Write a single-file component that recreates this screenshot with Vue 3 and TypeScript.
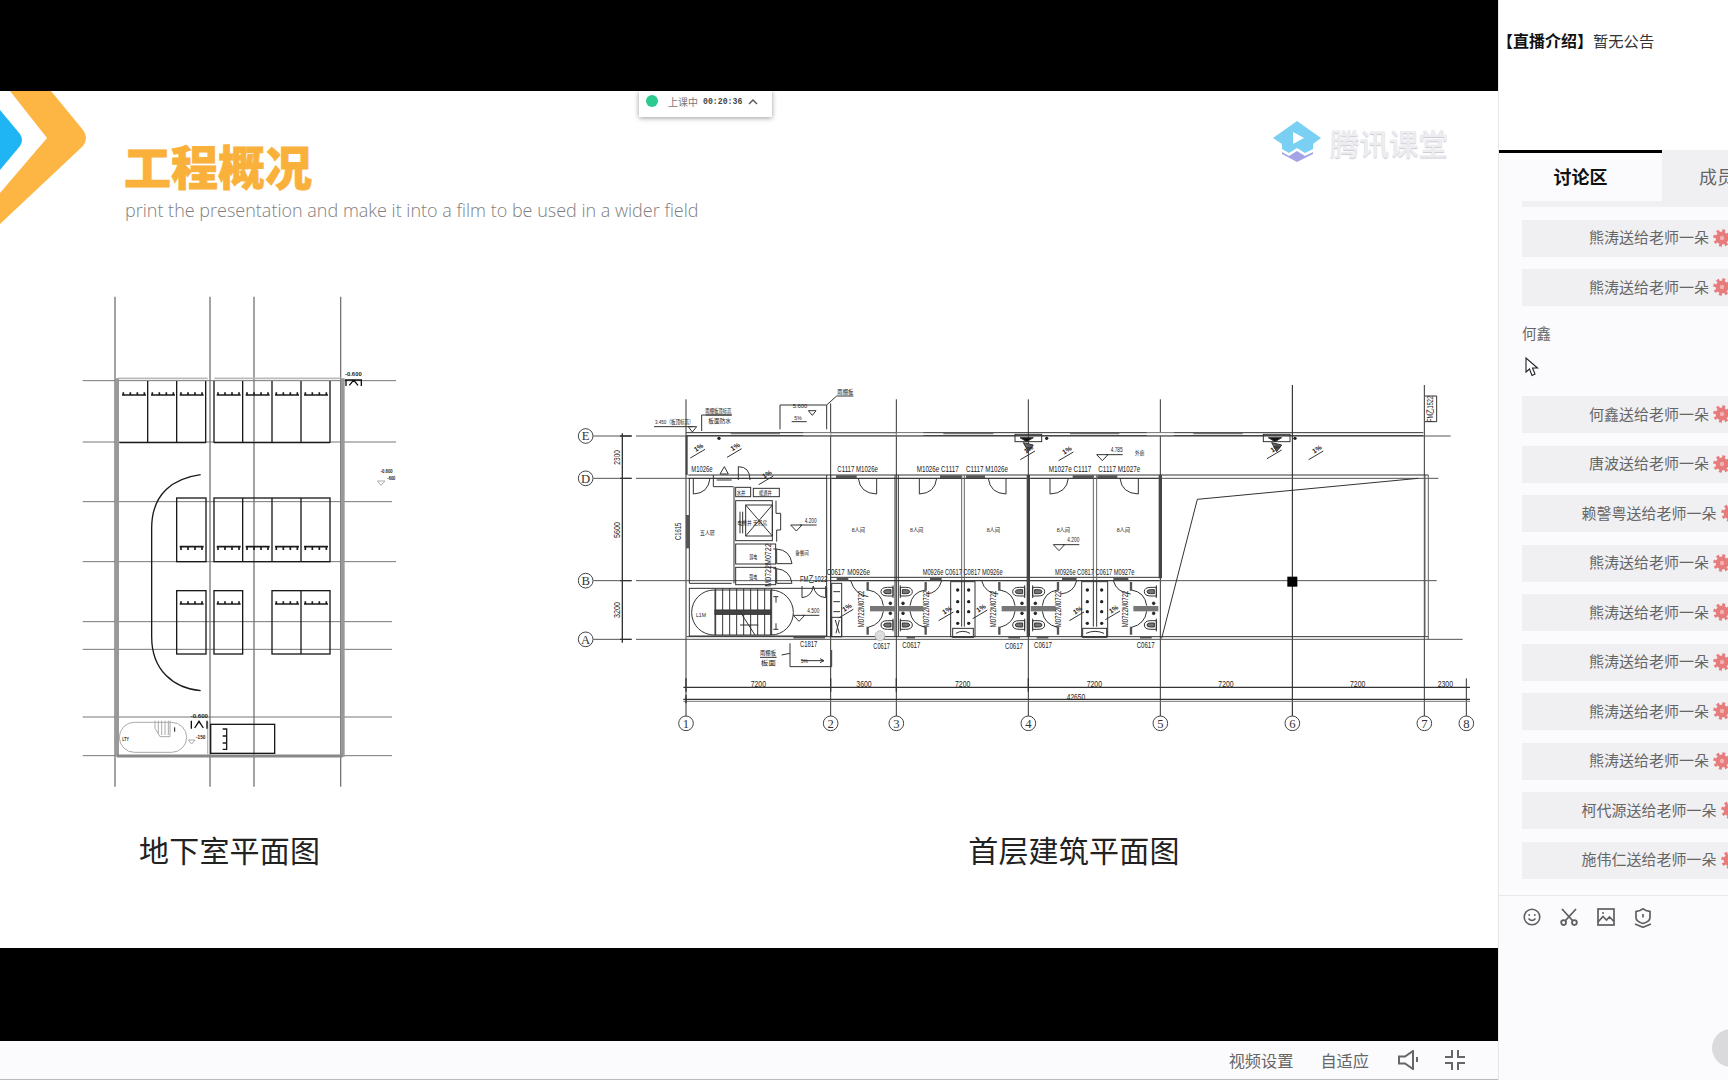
<script setup lang="ts">
interface Label {
  x: number
  y: number
  t: string
  w?: number
  s?: number
  r?: boolean
}

// second half of the first-floor plan was measured from x=1000, so it is shifted by this
const S = 1320

const gifts = [
  '熊涛', '熊涛', null, '何鑫', '唐波', '赖謦粤', '熊涛', '熊涛', '熊涛', '熊涛', '熊涛', '柯代源', '施伟仁',
]

// basement plan
const tickRows = [345, 800, 972]
const tickSpans: Record<number, number[]> = {
  345: [186, 273, 359, 470, 557, 645, 732],
  800: [359, 470, 557, 645, 732],
  972: [359, 470, 645, 732],
}
const tickPath = (y: number) =>
  tickSpans[y]
    .map((x) => {
      const dir = y === 800 ? 10 : -8
      let d = `M${x} ${y}h72`
      for (let i = 0; i < 4; i++) d += `M${x + 4 + i * 21} ${y}v${dir}`
      return d
    })
    .join('')
const basementTicks = tickRows.map(tickPath).join('')

const basementLabels: Label[] = [
  { x: 855, y: 288, t: '-0.600', w: 50, s: 18 },
  { x: 962, y: 580, t: '-0.600', w: 36, s: 18 },
  { x: 982, y: 600, t: '-600', w: 24, s: 18 },
  { x: 392, y: 1314, t: '-0.600', w: 52, s: 18 },
  { x: 408, y: 1378, t: '-150', w: 28, s: 18 },
  { x: 187, y: 1382, t: 'LTY', w: 20, s: 16 },
]

// first-floor plan
const axisNums = [
  { x: 378, t: '1' }, { x: 812, t: '2' }, { x: 1009, t: '3' }, { x: 1405, t: '4' },
  { x: 481 + S, t: '5' }, { x: 877 + S, t: '6' }, { x: 1273 + S, t: '7' }, { x: 1399 + S, t: '8' },
]
const axisLetters = [
  { y: 198, t: 'E' }, { y: 325, t: 'D' }, { y: 632, t: 'B' }, { y: 808, t: 'A' },
]
const stalls = [
  { x: 1005, flip: false }, { x: 1015, flip: true }, { x: 1400, flip: false },
  { x: 1412, flip: true }, { x: 1795, flip: false },
]
const doors = [
  'M400 325v47Q445 370 450 325', 'M950 325v47Q900 370 895 325', 'M1078 325v47Q1125 370 1130 325',
  'M1338 325v47Q1290 370 1285 325', 'M1470 325v47Q1520 370 1525 325', `M${415 + S} 325v47Q${365 + S} 370 ${360 + S} 325`,
  'M872 632Q885 675 925 680', 'M1145 632Q1135 670 1098 672', 'M1265 632Q1275 670 1315 672',
  `M${230 + S} 632Q${222 + S} 668 ${182 + S} 672`, `M${340 + S} 632Q${350 + S} 668 ${392 + S} 672`,
  'M726 648v35Q755 680 760 648', 'M797 648v35Q765 680 760 648',
  'M640 537h10v44h46Q690 540 650 537', 'M640 596h10v44h46Q690 600 650 596', 'M535 330v-40Q570 290 570 330',
]
const slopes = [
  [415, 250], [525, 248], [620, 330], [1405, 255], [200 + S, 258], [825 + S, 252], [950 + S, 255],
  [860, 730], [1160, 738], [1262, 732], [232 + S, 738], [340 + S, 735],
]
const columns = [1365, 790 + S]
const dots = [[477, 205], [1460, 205], [885 + S, 205]]
const elevations = [
  { x: 692, y: 465, t: '4.200', tx: 734, ty: 458, w: 36 },
  { x: 700, y: 736, t: '4.500', tx: 742, ty: 728, w: 36 },
  { x: 290 + S, y: 254, t: '4.785', tx: 332 + S, ty: 246, w: 36 },
  { x: 160 + S, y: 524, t: '4.200', tx: 202 + S, ty: 516, w: 36 },
]

const floorLabels: Label[] = [
  { x: 394, y: 307, t: 'M1026e', w: 64 },
  { x: 832, y: 307, t: 'C1117 M1026e', w: 122 },
  { x: 1070, y: 307, t: 'M1026e C1117', w: 126 },
  { x: 1218, y: 307, t: 'C1117 M1026e', w: 126 },
  { x: 1466, y: 307, t: 'M1027e C1117', w: 128 },
  { x: 295 + S, y: 307, t: 'C1117 M1027e', w: 126 },
  { x: 800, y: 616, t: 'C0617', w: 54 },
  { x: 862, y: 616, t: 'M0926e', w: 68 },
  { x: 1088, y: 616, t: 'M0926e C0617 C0817 M0926e', w: 240 },
  { x: 165 + S, y: 616, t: 'M0926e C0817 C0617 M0927e', w: 238 },
  { x: 720, y: 637, t: 'FM乙1022', w: 82 },
  { x: 720, y: 831, t: 'C1817', w: 52 },
  { x: 940, y: 836, t: 'C0617', w: 50 },
  { x: 1027, y: 835, t: 'C0617', w: 54 },
  { x: 1335, y: 836, t: 'C0617', w: 54 },
  { x: 1422, y: 833, t: 'C0617', w: 54 },
  { x: 410 + S, y: 833, t: 'C0617', w: 54 },
  { x: 572, y: 950, t: '7200', w: 46 },
  { x: 889, y: 950, t: '3600', w: 46 },
  { x: 1185, y: 950, t: '7200', w: 46 },
  { x: 260 + S, y: 950, t: '7200', w: 46 },
  { x: 655 + S, y: 950, t: '7200', w: 46 },
  { x: 1050 + S, y: 950, t: '7200', w: 46 },
  { x: 1313 + S, y: 950, t: '2300', w: 46 },
  { x: 200 + S, y: 990, t: '42650', w: 56 },
  { x: 420, y: 496, t: '五人寝', w: 44, s: 17 },
  { x: 875, y: 486, t: '8人间', w: 40, s: 17 },
  { x: 1050, y: 486, t: '8人间', w: 40, s: 17 },
  { x: 1280, y: 486, t: '8人间', w: 40, s: 17 },
  { x: 170 + S, y: 486, t: '8人间', w: 40, s: 17 },
  { x: 350 + S, y: 486, t: '8人间', w: 40, s: 17 },
  { x: 706, y: 556, t: '备餐间', w: 40, s: 17 },
  { x: 405 + S, y: 256, t: '外廊', w: 28, s: 17 },
  { x: 568, y: 566, t: '弱电', w: 24, s: 17 },
  { x: 568, y: 628, t: '强电', w: 24, s: 17 },
  { x: 530, y: 374, t: '水井', w: 26, s: 17 },
  { x: 597, y: 376, t: '暖通井', w: 38, s: 17 },
  { x: 532, y: 464, t: '电梯井 无机房', w: 90, s: 17 },
  { x: 408, y: 740, t: 'L1M', w: 30, s: 17 },
  { x: 285, y: 162, t: '3.450（板顶标高）', w: 116, s: 18 },
  { x: 436, y: 128, t: '雨棚板顶标高', w: 78, s: 18 },
  { x: 445, y: 160, t: '板面防水', w: 68, s: 18 },
  { x: 832, y: 72, t: '雨棚板', w: 48, s: 18 },
  { x: 698, y: 113, t: '5.600', w: 44, s: 18 },
  { x: 703, y: 149, t: '5%', w: 22, s: 18 },
  { x: 600, y: 855, t: '雨棚板', w: 48, s: 18 },
  { x: 602, y: 884, t: '板面', w: 46, s: 18 },
  { x: 722, y: 880, t: '5%', w: 22, s: 18 },
  { x: 362, y: 510, t: 'C1615', w: 52, r: true },
  { x: 180, y: 284, t: '2300', w: 44, r: true },
  { x: 180, y: 504, t: '5600', w: 48, r: true },
  { x: 180, y: 744, t: '3200', w: 48, r: true },
  { x: 912, y: 772, t: 'M0722M0722', w: 110, r: true },
  { x: 1108, y: 772, t: 'M0722M0722', w: 110, r: true },
  { x: 1308, y: 772, t: 'M0722M0722', w: 110, r: true },
  { x: 183 + S, y: 772, t: 'M0722M0722', w: 110, r: true },
  { x: 383 + S, y: 772, t: 'M0722M0722', w: 110, r: true },
  { x: 632, y: 650, t: 'M0722M0722', w: 130, r: true },
  { x: 1298 + S, y: 156, t: 'FM乙1522', w: 78, r: true },
]
const labelTransform = (l: Label) => (l.r ? `rotate(-90 ${l.x} ${l.y})` : undefined)

const treads = Array.from({ length: 9 }, (_, i) => 467 + i * 21)
</script>

<template>
  <div class="page">
    <div class="main">
      <div class="band-top"></div>
      <div class="slide">
        <div class="status">
          <span class="status-dot"></span>
          <span class="status-text">上课中</span>
          <span class="status-time">00:20:36</span>
          <svg class="status-arrow" width="10" height="7" viewBox="0 0 10 7">
            <path d="M1 6l4-4 4 4" fill="none" stroke="#555" stroke-width="1.4" />
          </svg>
        </div>

        <div class="head">
          <svg class="chevron" width="88" height="134" viewBox="0 0 88 134">
            <path d="M10 0H51L83 39Q89 47 83 55L0 133V102L47 47Z" fill="#fdb644" />
            <path d="M0 19L20 43Q24 49 20 55L0 79Z" fill="#1fb5f4" />
          </svg>
          <div class="head-text">
            <div class="title">工程概况</div>
            <div class="subtitle">print the presentation and make it into a film to be used in a wider field</div>
          </div>
          <div class="brand">
            <svg width="49" height="42" viewBox="0 0 49 42">
              <path d="M24 0L48 17L40 23V28L32 32L24 27L16 32L9 28V23L0 17Z" fill="#7ad0f2" />
              <path d="M9 31L16 35L24 30L32 35L40 31V33L24 41L9 33Z" fill="#a3a3e6" />
              <path d="M20 11L31 17L20 23Z" fill="#fff" />
            </svg>
            <span class="brand-name">腾讯课堂</span>
          </div>
        </div>

        <div class="plans">
          <svg class="plan plan-b" width="360" height="520" viewBox="0 0 1080 1560">
            <g fill="none" stroke="#777" stroke-width="4">
              <path d="M165 50V1520M450 50V1520M582 50V1520M842 50V1520" />
              <path stroke-width="3" d="M68 302H1008M68 486H1008M68 665H996M68 845H1008M68 1025H996M68 1108H996M68 1311H996M68 1427H996" />
            </g>
            <g fill="none">
              <path stroke="#bbb" stroke-width="5" d="M175 295H443M463 295H842" />
              <path stroke="#999" stroke-width="12" d="M171 295V1430M848 295V1430" />
              <path stroke="#888" stroke-width="9" d="M171 1428H848" />
              <path stroke="#bbb" stroke-width="4" d="M443 1325V1425" />
            </g>
            <g fill="none" stroke="#1a1a1a" stroke-width="4">
              <path d="M263 303V488M350 303V488M437 303V488M178 488H438M462 303V488M548 303V488M636 303V488M723 303V488M810 303V488M462 488H810" />
              <rect x="350" y="654" width="88" height="191" />
              <rect x="462" y="654" width="348" height="191" />
              <path d="M548 654V845M636 654V845M723 654V845" />
              <rect x="350" y="932" width="88" height="190" />
              <rect x="462" y="932" width="86" height="190" />
              <rect x="636" y="932" width="174" height="190" />
              <path d="M723 932V1122" />
              <path d="M422 584C340 595 275 640 275 745L275 1070C275 1170 340 1225 422 1232" />
              <rect x="452" y="1333" width="192" height="87" />
              <path d="M500 1345V1410M488 1347H500M488 1368H500M488 1389H500M488 1408H500" />
              <path :d="basementTicks" stroke-width="5" />
            </g>
            <g fill="none" stroke="#aaa" stroke-width="3">
              <rect x="178" y="1327" width="202" height="90" rx="45" />
              <path d="M285 1322V1345L300 1370H330V1322M295 1322V1360M305 1322V1365M315 1322V1365M325 1322V1365" />
              <path d="M385 1380H405L395 1392Z" />
              <path d="M952 603H975L963 616Z" />
            </g>
            <g fill="none" stroke="#111" stroke-width="3">
              <path d="M858 298V318M904 298V318M868 316L881 300L894 316M855 300H905" stroke-width="4" />
              <path d="M394 1322V1346M441 1322V1346M404 1344L417 1324L430 1344" stroke-width="4" />
              <path d="M344 1342V1355" />
            </g>
            <g class="cad-text">
              <text
                v-for="l in basementLabels"
                :key="l.x + l.t"
                :x="l.x"
                :y="l.y"
                :font-size="l.s"
                :textLength="l.w"
                lengthAdjust="spacingAndGlyphs"
                font-weight="700"
              >{{ l.t }}</text>
            </g>
          </svg>

          <svg class="plan plan-f" width="938" height="380" viewBox="0 0 2814 1140">
            <!-- axes -->
            <g fill="none" stroke="#333" stroke-width="3">
              <path d="M378 88V1040M812 100V1040M1009 88V1040M1405 88V1040" />
              <path :d="`M${481 + S} 88V1040M${1273 + S} 45V1040M${1399 + S} 925V1040`" />
              <path stroke="#111" :d="`M${877 + S} 45V1040`" />
              <path stroke="#555" :d="`M100 198H215M228 198H${1352 + S}M100 325H215M228 325H${1315 + S}M100 632H215M228 632H${1310 + S}M100 808H215M228 808H${1388 + S}`" />
              <path stroke-width="4" d="M187 190V818M180 198H215M180 325H215M180 632H215M180 808H215" />
              <path stroke-width="4" :d="`M370 952H${1410 + S}M370 988H${1410 + S}`" />
              <path stroke="#777" stroke-width="3" :d="`M370 994H${1410 + S}`" />
              <path stroke-width="4" d="M378 925V965M812 925V965M1009 925V965M1405 925V965M378 975V1000" />
            </g>
            <g fill="none" stroke="#444" stroke-width="3">
              <g v-for="a in axisNums" :key="a.x"><circle :cx="a.x" cy="1060" r="22" fill="#fff" /></g>
              <g v-for="a in axisLetters" :key="a.y"><circle cx="77" :cy="a.y" r="22" /></g>
            </g>
            <g class="axis-text">
              <text v-for="a in axisNums" :key="a.x" :x="a.x" y="1073" font-size="38" text-anchor="middle">{{ a.t }}</text>
              <text v-for="a in axisLetters" :key="a.y" x="77" :y="a.y + 13" font-size="38" text-anchor="middle">{{ a.t }}</text>
            </g>

            <!-- walls -->
            <g fill="none" stroke="#333" stroke-width="3">
              <path :d="`M378 188H${1270 + S}M385 315H${1285 + S}M385 325H800M815 325H1400M1412 325H1795M380 800H${1285 + S}M812 622H1798M812 632H1798`" />
              <path d="M388 325V640H515M522 350V640" />
              <path d="M800 315V800M812 315V800M1005 315V800M1015 315V800" />
              <path stroke="#666" d="M1205 315V632M1213 315V632" />
              <path :d="`M${280 + S} 315V632M${290 + S} 315V632M${1275 + S} 315V800M${1285 + S} 315V808`" stroke="#666" />
              <path :d="`M${485 + S} 805L${592 + S} 388L${1255 + S} 325`" />
              <path stroke="#444" stroke-width="6" d="M380 198V315" />
              <path stroke="#444" stroke-width="10" :d="`M1405 315V800M${481 + S} 315V625`" />
              <path stroke="#555" stroke-width="10" d="M383 435V535" />
              <path stroke="#555" stroke-width="8" :d="`M828 320H890M1140 320H1205M1218 320H1275M${218 + S} 320H${280 + S}M${292 + S} 320H${352 + S}M830 627H865M1110 627H1145M${186 + S} 627H${230 + S}M${340 + S} 627H${385 + S}`" />
              <path stroke="#555" stroke-width="7" :d="`M700 802H795M945 802H975M1040 802H1065M1345 802H1380M1430 802H1465M${420 + S} 802H${455 + S}`" />
              <path stroke="#777" stroke-width="4" :d="`M512 191H660M1150 191H1300M${210 + S} 191H${358 + S}M${580 + S} 191H${728 + S}`" />
              <path stroke="#333" stroke-width="3" :d="`M378 197H${1270 + S}`" />
              <path stroke="#fff" stroke-width="7" :d="`M730 192H812M1010 192H1090M${440 + S} 192H${522 + S}`" />
              <path stroke="#888" stroke-width="2" :d="`M730 188H1090M730 197H1090M${440 + S} 188H${522 + S}M${440 + S} 197H${522 + S}`" />
            </g>

            <!-- core -->
            <g fill="none" stroke="#333" stroke-width="3">
              <rect x="527" y="352" width="45" height="28" />
              <rect x="580" y="355" width="78" height="25" />
              <rect x="527" y="392" width="110" height="120" />
              <rect x="557" y="405" width="80" height="93" />
              <path d="M557 405L637 498M637 405L557 498" />
              <rect x="527" y="522" width="120" height="60" />
              <rect x="527" y="592" width="120" height="52" />
              <path d="M648 392V430H662V480H650V515M540 425V490M548 425V490" />
              <path d="M460 315V350H520M470 330H515" />
              <path d="M493 290L480 312H505Z" />
              <rect x="388" y="655" width="412" height="143" />
              <rect x="395" y="660" width="305" height="135" rx="67" />
              <path d="M465 660V795M632 660V795" />
              <path v-for="t in treads" :key="t" :d="`M${t} 655V795`" />
              <rect x="465" y="720" width="167" height="13" fill="#444" />
              <path d="M540 725L585 795M540 765H595M648 680V698M648 760V778M640 680H655M640 778H655" />
              <path v-for="d in doors" :key="d" :d="d" />
              <rect x="815" y="640" width="30" height="160" />
              <rect x="815" y="742" width="30" height="58" />
              <path d="M826 750L838 790M828 790L838 750M820 665H840M820 695H840M820 725H840" />
              <rect x="1172" y="635" width="73" height="165" />
              <rect x="1178" y="775" width="62" height="27" />
              <path d="M1205 632V770M1213 632V770M1188 790Q1208 778 1230 790" />
              <rect :x="245 + S" y="635" width="78" height="165" />
              <rect :x="248 + S" y="775" width="72" height="27" />
              <path :d="`M${280 + S} 632V770M${290 + S} 632V770M${258 + S} 790Q${285 + S} 778 ${312 + S} 790`" />
              <path d="M660 178V105H800V178M800 105L830 78H880M282 170H400M385 170L410 170L397 186ZM425 183V135H515M437 135H515M695 155H740M745 122H768L757 136Z" />
              <path d="M690 820V890H815V840M665 855L690 850M600 862H650M725 872H790M780 866L792 872L780 878" />
              <path :d="`M${1275 + S} 78H${1310 + S}V155H${1275 + S}`" />
            </g>
            <g fill="#222">
              <circle v-for="c in [660, 695, 725, 760]" :key="c" cx="1193" :cy="c" r="5" />
              <circle v-for="c in [660, 695, 725, 760]" :key="c" cx="1226" :cy="c" r="5" />
              <circle v-for="c in [660, 695, 725, 760]" :key="c" :cx="262 + S" :cy="c" r="5" />
              <circle v-for="c in [660, 695, 725, 760]" :key="c" :cx="305 + S" :cy="c" r="5" />
              <circle v-for="d in dots" :key="d[0]" :cx="d[0]" :cy="d[1]" r="5" />
              <rect :x="862 + S" y="620" width="30" height="30" fill="#000" />
            </g>

            <!-- toilet stalls -->
            <g
              v-for="s in stalls"
              :key="s.x"
              :transform="`translate(${s.x} 632) scale(${s.flip ? -1 : 1} 1)`"
              fill="none"
              stroke="#333"
              stroke-width="3"
            >
              <path stroke="#777" stroke-width="16" d="M-75 84H0" />
              <path d="M-80 28Q-40 35 -35 75M-80 140Q-40 130 -35 92" />
              <path stroke="#555" stroke-width="7" d="M-82 4V30M-82 138V162" />
              <path d="M-6 20H-22Q-42 20 -42 33Q-42 46 -22 46H-6ZM-6 14V52" />
              <path d="M-12 27H-24Q-34 27 -34 33Q-34 39 -24 39H-12Z" fill="#777" />
              <path d="M-6 120H-22Q-42 120 -42 133Q-42 146 -22 146H-6ZM-6 114V152" />
              <path d="M-12 127H-24Q-34 127 -34 133Q-34 139 -24 139H-12Z" fill="#777" />
              <circle cx="-14" cy="68" r="4" fill="#222" />
              <circle cx="-14" cy="98" r="4" fill="#222" />
            </g>

            <!-- column blocks -->
            <g v-for="c in columns" :key="c" fill="none" stroke="#333" stroke-width="3">
              <rect :x="c" y="193" width="80" height="22" />
              <path :d="`M${c + 15} 203H${c + 55}L${c + 35} 215Z`" fill="#111" />
              <path :d="`M${c + 25} 218L${c + 40} 245L${c + 55} 225Z`" fill="#666" />
            </g>
            <g fill="none" stroke="#333" stroke-width="3">
              <path
                v-for="p in slopes"
                :key="p[0] + '-' + p[1]"
                :d="`M${p[0] - 24} ${p[1] + 14}L${p[0] + 20} ${p[1] - 12}`"
              />
              <g v-for="e in elevations" :key="e.x">
                <path :d="`M${e.x} ${e.y}h34l-17 18zM${e.x + 28} ${e.y}h50`" />
              </g>
            </g>
            <circle cx="960" cy="797" r="15" fill="#ddd" stroke="#aaa" stroke-width="2" />

            <g class="cad-text">
              <text
                v-for="p in slopes"
                :key="'s' + p[0] + '-' + p[1]"
                :x="p[0] - 8"
                :y="p[1] - 4"
                font-size="20"
                font-weight="700"
                :transform="`rotate(-32 ${p[0] - 8} ${p[1] - 4})`"
              >1%</text>
              <text
                v-for="l in floorLabels"
                :key="l.x + l.t + l.y"
                :x="l.x"
                :y="l.y"
                :font-size="l.s ?? 25"
                :textLength="l.w"
                lengthAdjust="spacingAndGlyphs"
                :transform="labelTransform(l)"
              >{{ l.t }}</text>
              <text
                v-for="e in elevations"
                :key="e.t + e.tx"
                :x="e.tx"
                :y="e.ty"
                font-size="23"
                :textLength="e.w"
                lengthAdjust="spacingAndGlyphs"
              >{{ e.t }}</text>
            </g>
          </svg>
        </div>

        <div class="captions">
          <span>地下室平面图</span>
          <span>首层建筑平面图</span>
        </div>
      </div>
      <div class="band-bottom"></div>
      <div class="controls">
        <span>视频设置</span>
        <span>自适应</span>
        <svg class="speaker" width="20" height="20" viewBox="0 0 20 20" fill="none" stroke="#666" stroke-width="2">
          <path d="M1 6.5H7L15 1V19L7 13.5H1Z" />
          <path d="M19 7V12" />
        </svg>
        <svg width="20" height="20" viewBox="0 0 20 20" fill="none" stroke="#666" stroke-width="2">
          <path d="M7 0V7H0M13 0V7H20M0 13H7V20M20 13H13V20" />
        </svg>
      </div>
    </div>

    <aside class="side">
      <div class="notice"><b>【直播介绍】</b>暂无公告</div>
      <div class="tabs">
        <div class="tab tab-on">讨论区</div>
        <div class="tab">成员</div>
      </div>
      <div class="chat">
        <div class="gift gift-cut"></div>
        <template v-for="(name, i) in gifts" :key="i">
          <div v-if="name === null" class="msg">
            <div class="msg-name">何鑫</div>
            <svg class="mouse" width="14" height="20" viewBox="0 0 14 20">
              <path d="M1 1V15L4.5 12L7 18.5L10 17L7.5 11H12.5Z" fill="#fff" stroke="#222" stroke-width="1.1" />
            </svg>
          </div>
          <div v-else class="gift">
            <span class="gift-text">{{ name }}送给老师一朵</span>
            <svg class="flower" width="18" height="18" viewBox="0 0 18 18">
              <circle cx="9" cy="9" r="7.2" fill="none" stroke="#e67c7c" stroke-width="3.2" stroke-dasharray="2.83 2.83" />
              <circle cx="9" cy="9" r="6.4" fill="#e67c7c" />
              <circle cx="9" cy="9" r="2.2" fill="#f3b2b2" />
            </svg>
          </div>
        </template>
      </div>
      <div class="tools">
        <svg width="18" height="18" viewBox="0 0 18 18" fill="none" stroke="#5f5f63" stroke-width="1.6">
          <circle cx="9" cy="9" r="7.8" />
          <path d="M5.5 10.5Q9 14.5 12.5 10.5" />
          <circle cx="6.2" cy="7" r="0.9" fill="#5f5f63" stroke="none" />
          <circle cx="11.8" cy="7" r="0.9" fill="#5f5f63" stroke="none" />
        </svg>
        <svg width="18" height="18" viewBox="0 0 18 18" fill="none" stroke="#5f5f63" stroke-width="1.8">
          <path d="M2 1L12.5 12.5M16 1L5.5 12.5" />
          <circle cx="3.6" cy="14.6" r="2.4" />
          <circle cx="14.4" cy="14.6" r="2.4" />
        </svg>
        <svg width="18" height="18" viewBox="0 0 18 18" fill="none" stroke="#5f5f63" stroke-width="1.7">
          <rect x="1" y="1" width="16" height="16" />
          <path d="M1 14L6 8.5L9.5 12L12.5 9L17 13.5" />
          <circle cx="6" cy="5" r="1" fill="#5f5f63" stroke="none" />
        </svg>
        <svg width="18" height="20" viewBox="0 0 18 20" fill="none" stroke="#5f5f63" stroke-width="1.7">
          <path d="M2 3.5L6 2.5L9 0.8L12 2.5L16 3.5V9.5Q16 13.5 9 15.5Q2 13.5 2 9.5Z" />
          <path d="M9 6V9.5" />
          <path d="M1 16L9 19.3L17 16" />
        </svg>
      </div>
      <div class="float-btn"></div>
    </aside>
  </div>
</template>

<style>
html, body { margin: 0; background: #fff; }
</style>

<style scoped>
.page {
  display: flex;
  width: 1728px;
  height: 1080px;
  overflow: hidden;
  font-family: "Noto Sans CJK SC", "Liberation Sans", sans-serif;
}
.main {
  flex: 0 0 1498px;
  display: flex;
  flex-direction: column;
}
.band-top { height: 91px; background: #000; }
.band-bottom { height: 93px; background: #000; }
.slide {
  position: relative;
  height: 857px;
  background: #fff;
  overflow: hidden;
}
.status {
  position: absolute;
  left: 639px;
  top: 0;
  width: 133px;
  height: 26px;
  box-sizing: border-box;
  padding: 0 0 6px 7px;
  display: flex;
  align-items: center;
  background: #fff;
  box-shadow: 0 1px 5px rgba(0, 0, 0, 0.4);
  font-size: 10px;
  color: #777;
}
.status-dot {
  width: 12px;
  height: 12px;
  border-radius: 50%;
  background: #2bcb8f;
}
.status-text { margin-left: 10px; }
.status-time {
  margin-left: 5px;
  font-family: "Liberation Mono", monospace;
  font-size: 8.2px;
  font-weight: 700;
  color: #444;
}
.status-arrow { margin-left: 6px; }
.head {
  display: flex;
  height: 189px;
}
.chevron { flex: none; }
.head-text {
  margin-left: 36px;
  padding-top: 50px;
}
.title {
  font-size: 47px;
  line-height: 47px;
  font-weight: 900;
  color: #f9b13c;
  -webkit-text-stroke: 0.8px #f9b13c;
}
.subtitle {
  margin: 10px 0 0 1px;
  font-family: "Open Sans", sans-serif;
  font-weight: 300;
  font-size: 18px;
  line-height: 24px;
  color: #808080;
  white-space: nowrap;
}
.brand {
  margin-left: auto;
  margin-top: 30px;
  margin-right: 50px;
  height: 42px;
  display: flex;
  align-items: center;
  gap: 8px;
}
.brand-name {
  font-size: 29.5px;
  line-height: 40px;
  color: #ededf1;
  text-shadow: 0 1px 1px #c9c9d0;
  font-weight: 500;
}
.plans {
  display: flex;
  gap: 140px;
  height: 520px;
  padding-left: 60px;
}
.plan { flex: none; }
.plan-f { margin-top: 90px; }
.captions {
  display: flex;
  gap: 648px;
  margin-top: 28px;
  padding-left: 139px;
  font-size: 30px;
  letter-spacing: 0.2px;
  line-height: 42px;
  color: #222;
}
.cad-text text {
  font-family: "Liberation Sans", "Noto Sans CJK SC", sans-serif;
  fill: #222;
}
.axis-text text {
  font-family: "Liberation Serif", serif;
  fill: #333;
}
.controls {
  flex: 1;
  display: flex;
  align-items: center;
  justify-content: flex-end;
  gap: 27px;
  padding-right: 33px;
  background: #fbfbfd;
  border-bottom: 1px solid #bbb;
  font-size: 16.2px;
  color: #666;
}
.speaker { margin-left: 2px; }
.side {
  position: relative;
  flex: 1;
  min-width: 0;
  overflow: hidden;
  background: #fbfbfd;
  border-left: 1px solid #e6e6e8;
  box-sizing: border-box;
}
.notice {
  height: 150px;
  box-sizing: border-box;
  padding-top: 28px;
  margin-left: -2px;
  background: #fff;
  font-size: 15.3px;
  line-height: 24px;
  color: #333;
  white-space: nowrap;
}
.notice b {
  font-size: 16px;
  color: #111;
}
.tabs {
  display: flex;
  height: 51px;
  width: 300px;
}
.tab {
  flex: 0 0 136px;
  box-sizing: border-box;
  padding: 3px 0 0 37px;
  background: #f0f0f2;
  font-size: 18px;
  line-height: 46px;
  color: #666;
  white-space: nowrap;
}
.tab-on {
  flex: 0 0 163px;
  padding-left: 0;
  text-align: center;
  border-top: 3px solid #000;
  padding-top: 0;
  background: #fbfbfd;
  color: #111;
  font-weight: 700;
}
.chat {
  display: flex;
  flex-direction: column;
  gap: 12.5px;
  height: 695px;
  width: 300px;
  box-sizing: border-box;
  padding-left: 23px;
  overflow: hidden;
  border-bottom: 1px solid #e8e8ea;
}
.gift {
  flex: none;
  width: 276px;
  height: 37px;
  display: flex;
  align-items: center;
  justify-content: center;
  gap: 4px;
  background: #f0eff1;
  font-size: 15px;
  color: #666;
  white-space: nowrap;
}
.gift-text { margin-bottom: 3px; }
.gift-cut { height: 6px; }
.flower { flex: none; margin-bottom: 1px; }
.msg {
  flex: none;
  height: 65px;
  padding-top: 2px;
  box-sizing: border-box;
}
.msg-name {
  font-size: 14.5px;
  line-height: 24px;
  color: #666;
}
.mouse {
  display: block;
  margin: 12px 0 0 3px;
}
.tools {
  display: flex;
  align-items: flex-start;
  gap: 19px;
  padding: 12px 0 0 24px;
}
.float-btn {
  position: absolute;
  left: 213px;
  top: 1029px;
  width: 38px;
  height: 38px;
  border-radius: 50%;
  background: #dadadc;
}
</style>
